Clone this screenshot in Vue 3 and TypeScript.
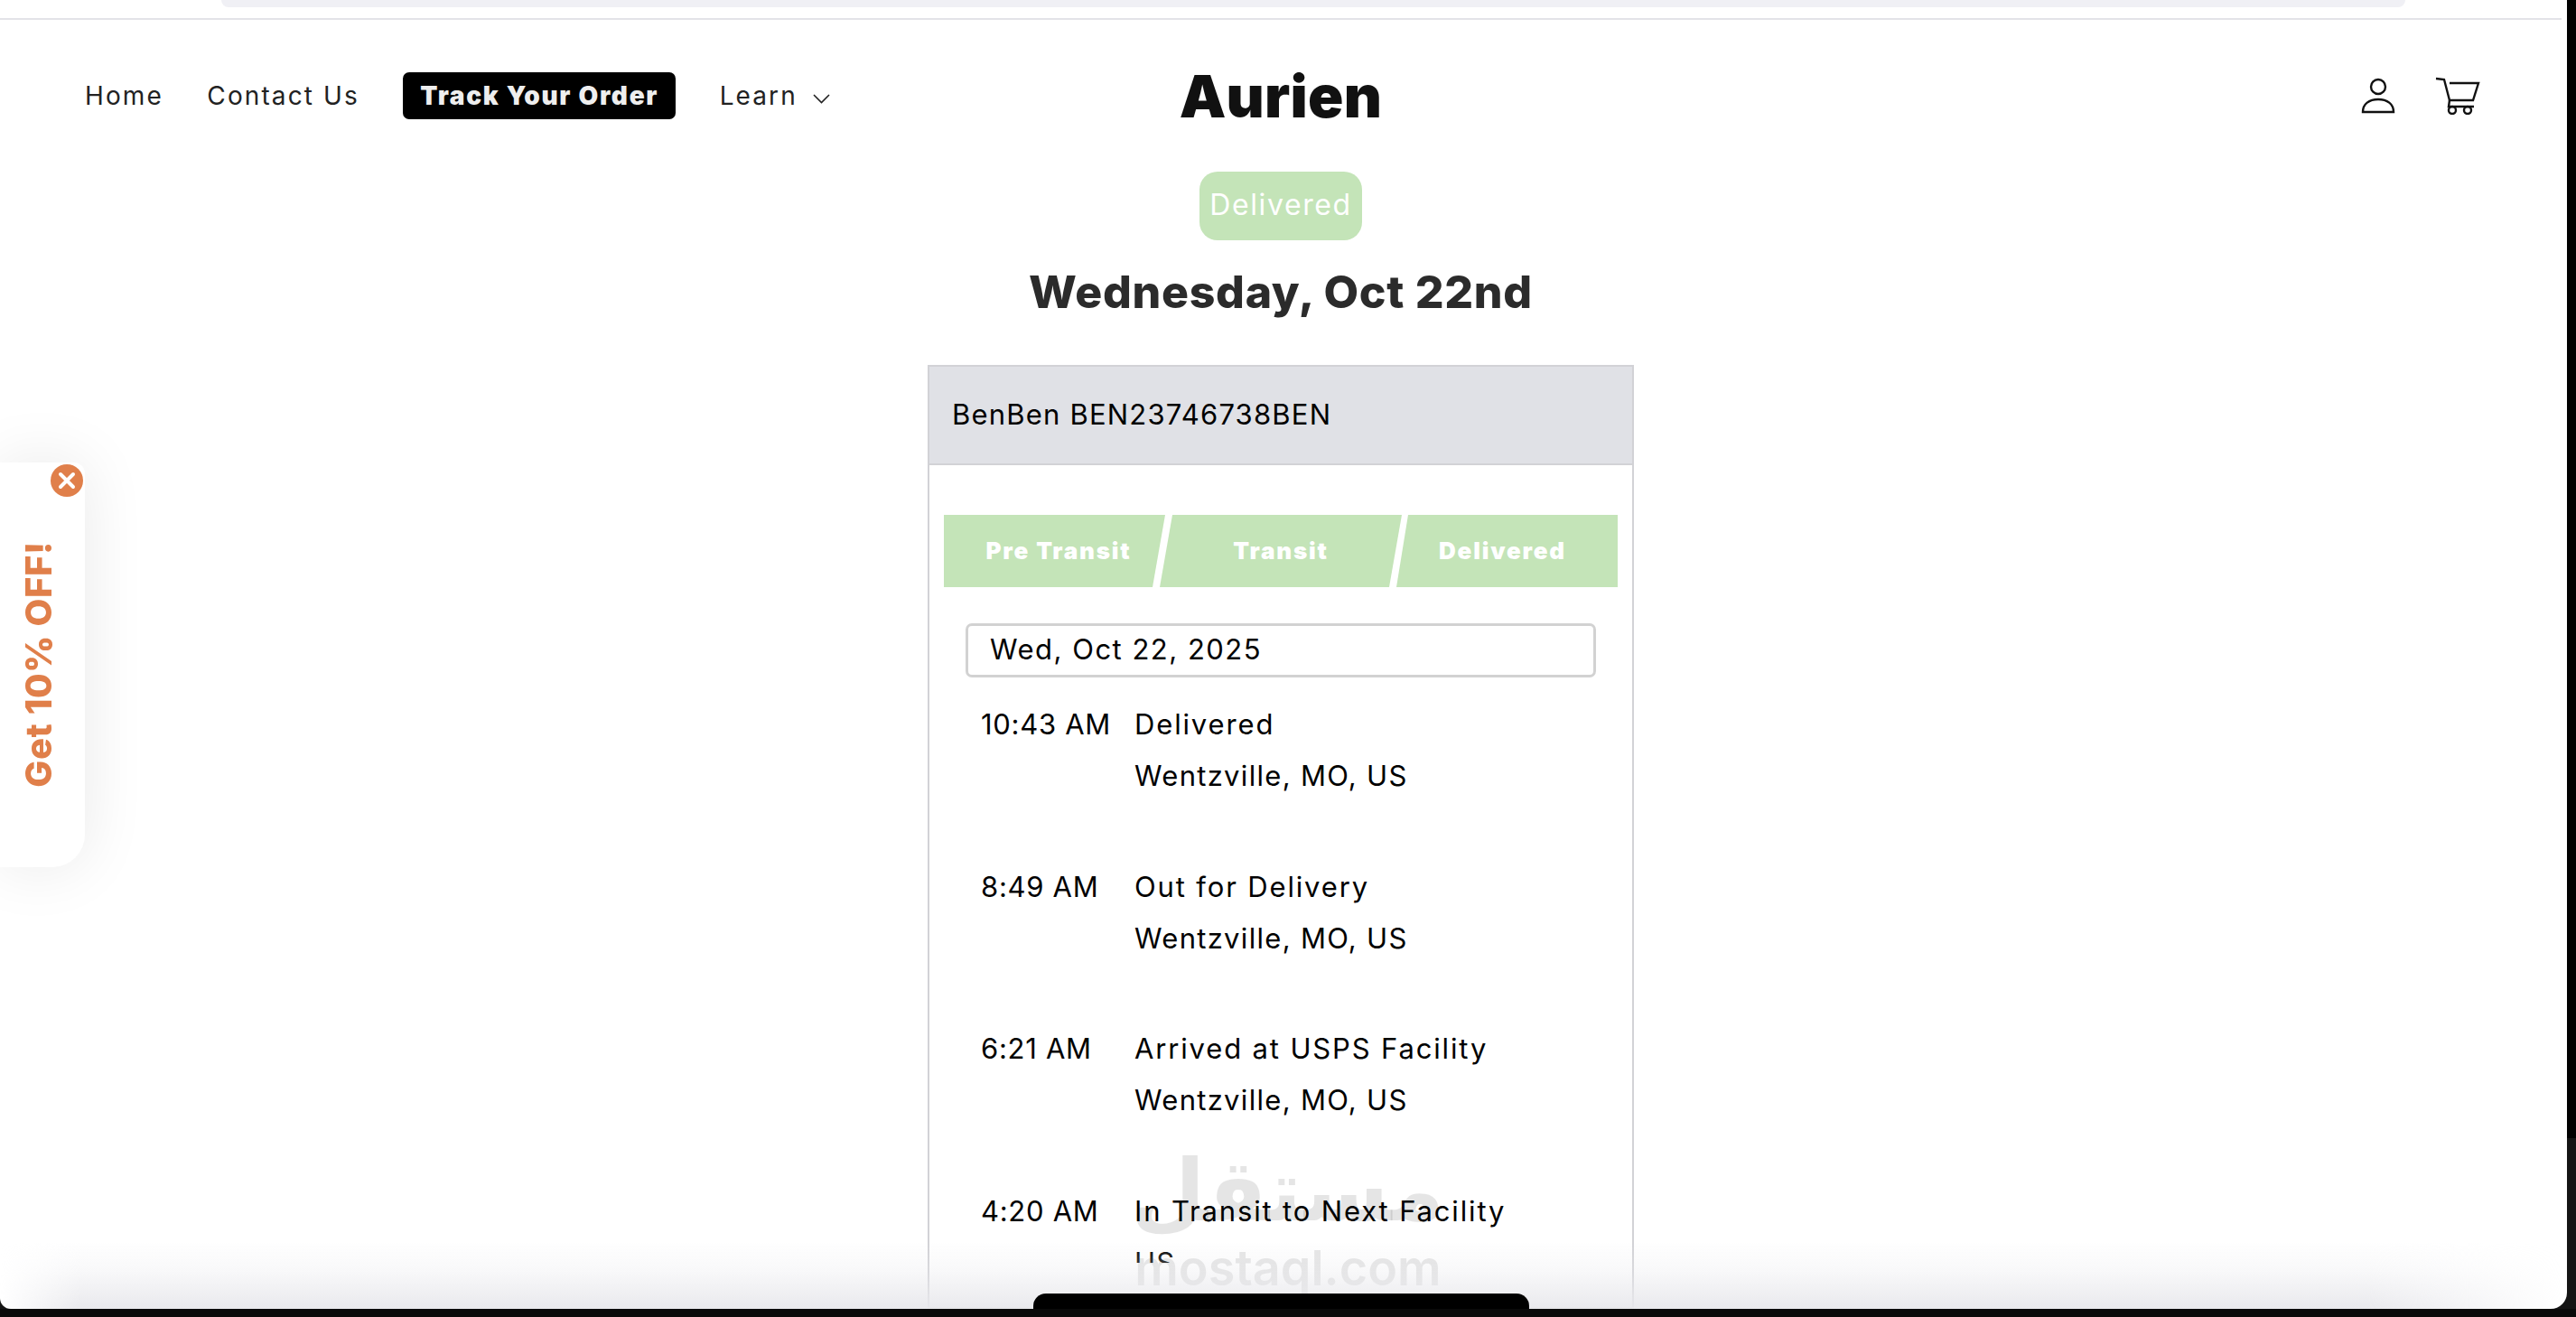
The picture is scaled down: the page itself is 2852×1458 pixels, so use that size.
<template>
  <div class="window">
    <div class="browser-top"><div class="browser-bar"></div></div>

    <header class="site-header">
      <nav class="nav">
        <a class="nav-link">Home</a>
        <a class="nav-link">Contact Us</a>
        <a class="nav-track">Track Your Order</a>
        <a class="nav-link nav-learn">
          Learn
          <svg class="chevron" width="19" height="11" viewBox="0 0 19 11" fill="none" stroke="#222" stroke-width="1.6">
            <path d="M1 1l8.500 8.500L18 1" />
          </svg>
        </a>
      </nav>
      <div class="logo">Aurien</div>
      <div class="header-icons">
        <svg width="38" height="40" viewBox="0 0 38 40" fill="none" stroke="#111" stroke-width="2.400">
          <circle cx="19" cy="10" r="8" />
          <path d="M2 38c0-9 7-14 17-14s17 5 17 14z" />
        </svg>
        <svg width="50" height="42" viewBox="0 0 50 42" fill="none" stroke="#111" stroke-width="2.400">
          <path d="M1 2l9 1 6 23h26l6-19H16" />
          <path d="M16 26l-1 7h28" />
          <circle cx="19" cy="37" r="4" />
          <circle cx="36" cy="37" r="4" />
        </svg>
      </div>
    </header>

    <main class="content">
      <div class="status-badge">Delivered</div>
      <h1 class="status-date">Wednesday, Oct 22nd</h1>

      <section class="track-card">
        <div class="track-head">BenBen BEN23746738BEN</div>
        <div class="track-body">
          <div class="steps">
            <div v-for="step in steps" :key="step" class="step">{{ step }}</div>
          </div>
          <div class="date-select">Wed, Oct 22, 2025</div>
          <div class="events">
            <div v-for="ev in events" :key="ev.time" class="event">
              <div class="event-time">{{ ev.time }}</div>
              <div>
                <div class="event-title">{{ ev.title }}</div>
                <div class="event-place">{{ ev.place }}</div>
              </div>
            </div>
          </div>
        </div>
      </section>
    </main>

    <aside class="promo">
      <span class="promo-text">Get 10% OFF!</span>
      <span class="promo-close">
        <svg width="20" height="20" viewBox="0 0 20 20" stroke="#fff" stroke-width="4" stroke-linecap="round">
          <path d="M3 3l14 14M17 3L3 17" />
        </svg>
      </span>
    </aside>

    <div class="watermark">
      <div class="watermark-ar">مستقل</div>
      <div class="watermark-en">mostaql.com</div>
    </div>
    <div class="bottom-fade"></div>
    <div class="home-pill"></div>
  </div>
</template>

<script setup lang="ts">
interface TrackEvent {
  time: string;
  title: string;
  place: string;
}

const steps: string[] = ['Pre Transit', 'Transit', 'Delivered'];

const events: TrackEvent[] = [
  { time: '10:43 AM', title: 'Delivered', place: 'Wentzville, MO, US' },
  { time: '8:49 AM', title: 'Out for Delivery', place: 'Wentzville, MO, US' },
  { time: '6:21 AM', title: 'Arrived at USPS Facility', place: 'Wentzville, MO, US' },
  { time: '4:20 AM', title: 'In Transit to Next Facility', place: 'US' }
];
</script>

<style>
html, body {
  margin: 0;
  height: 100%;
  overflow: hidden;
  background: linear-gradient(#000 1260px, #141414 1260px, #141414 1449px, #0a0a0a 1449px);
}
</style>

<style scoped>
.window {
  position: relative;
  box-sizing: border-box;
  width: 2842px;
  height: 1449px;
  padding-right: 6px;
  display: flex;
  flex-direction: column;
  background: #fff;
  border-radius: 0 0 18px 12px;
  overflow: hidden;
  font-family: Inter, "Liberation Sans", sans-serif;
  color: #000;
}

.browser-top {
  flex: none;
  height: 20px;
  border-bottom: 2px solid #e3e3e8;
  padding-left: 245px;
}

.browser-bar {
  width: 2418px;
  height: 8px;
  background: #f0f0f5;
  border-radius: 0 0 24px 24px;
}

.site-header {
  flex: none;
  height: 168px;
  display: grid;
  grid-template-columns: 1fr auto 1fr;
  align-items: center;
  padding: 0 90px;
}

.nav {
  margin-left: 4px;
  display: flex;
  align-items: center;
  gap: 48.500px;
  font-size: 28px;
  letter-spacing: 2.100px;
  color: #222;
}

.nav-learn {
  display: flex;
  align-items: center;
  gap: 17px;
}

.chevron {
  margin-top: 6px;
}

.nav-track {
  background: #000;
  color: #eee;
  font-weight: 900;
  font-size: 28px;
  letter-spacing: 1.700px;
  padding: 9px 19px;
  border-radius: 7px;
}

.logo {
  font-size: 65px;
  font-weight: 900;
  letter-spacing: 0.3px;
  color: #111;
}

.header-icons {
  display: flex;
  justify-content: flex-end;
  align-items: center;
  gap: 44px;
}

.content {
  flex: 1;
  min-height: 0;
  display: flex;
  flex-direction: column;
  align-items: center;
}

.status-badge {
  width: 180px;
  height: 76px;
  box-sizing: border-box;
  padding-bottom: 3px;
  display: flex;
  align-items: center;
  justify-content: center;
  background: #c4e4b8;
  color: #fff;
  font-size: 32px;
  letter-spacing: 1.600px;
  border-radius: 20px;
}

.status-date {
  margin: 27px 0 51px;
  font-size: 50px;
  line-height: 60px;
  font-weight: 800;
  letter-spacing: 0.7px;
  color: #2b2b2b;
}

.track-card {
  flex: 1;
  min-height: 0;
  box-sizing: border-box;
  width: 782px;
  border: 2px solid #d2d2d6;
  display: flex;
  flex-direction: column;
}

.track-head {
  flex: none;
  height: 109px;
  box-sizing: border-box;
  display: flex;
  align-items: center;
  padding: 0 0 2px 25px;
  background: #e0e1e6;
  border-bottom: 2px solid #d2d2d6;
  font-size: 31px;
  letter-spacing: 1.2px;
}

.track-body {
  padding: 55px 16px 0;
}

.steps {
  display: flex;
  height: 80px;
}

.step {
  flex: 0 0 245px;
  box-sizing: border-box;
  padding-bottom: 2px;
  display: flex;
  align-items: center;
  justify-content: center;
  background: #c4e4b8;
  color: #fff;
  font-weight: 900;
  font-size: 26px;
  letter-spacing: 1.800px;
  clip-path: polygon(0 0, 100% 0, calc(100% - 14px) 100%, 0 100%);
}

.step:nth-child(1) {
  padding-left: 9px;
}

.step:nth-child(2) {
  flex-basis: 268px;
  margin-left: -6px;
  clip-path: polygon(14px 0, 100% 0, calc(100% - 14px) 100%, 0 100%);
}

.step:nth-child(3) {
  margin-left: -6px;
  padding-right: 10px;
  clip-path: polygon(13px 0, 100% 0, 100% 100%, 0 100%);
}

.date-select {
  box-sizing: border-box;
  height: 60px;
  margin: 40px 24px 23px;
  padding: 0 0 3px 24px;
  display: flex;
  align-items: center;
  border: 3px solid #d2d2d2;
  border-radius: 7px;
  font-size: 31px;
  letter-spacing: 1.500px;
}

.events {
  height: 625px;
  overflow: hidden;
  padding-left: 41px;
  font-size: 31px;
  line-height: 57px;
}

.event {
  display: flex;
  margin-bottom: 65.500px;
}

.event-time {
  flex: 0 0 170px;
  letter-spacing: 0.7px;
}

.event-title {
  letter-spacing: 1.850px;
}

.event-place {
  letter-spacing: 1.300px;
}

.promo {
  position: absolute;
  left: 0;
  top: 512px;
  width: 94px;
  height: 448px;
  background: #fff;
  border-radius: 0 12px 36px 0;
  box-shadow: 0 0 70px rgba(0, 0, 0, 0.09);
}

.promo-text {
  position: absolute;
  left: 22px;
  top: 87px;
  writing-mode: vertical-rl;
  transform: rotate(180deg);
  font-size: 40px;
  line-height: 42px;
  font-weight: 800;
  letter-spacing: 0.6px;
  color: #e07f4a;
}

.promo-close {
  position: absolute;
  left: 56px;
  top: 2px;
  width: 36px;
  height: 36px;
  border-radius: 50%;
  background: #e07f4a;
  display: flex;
  align-items: center;
  justify-content: center;
}

.watermark {
  position: absolute;
  left: 1252px;
  top: 1262px;
  width: 344px;
  text-align: center;
  color: rgba(0, 0, 0, 0.1);
  pointer-events: none;
}

.watermark-ar {
  font-family: "DejaVu Sans", sans-serif;
  font-weight: 700;
  font-size: 95px;
  line-height: 112px;
}

.watermark-en {
  margin-left: 4px;
  font-size: 54px;
  line-height: 60px;
  font-weight: 600;
}

.bottom-fade {
  position: absolute;
  left: 0;
  right: 0;
  bottom: 0;
  height: 75px;
  background: linear-gradient(rgba(232, 232, 236, 0), rgba(232, 232, 236, 0.3) 45%, rgba(232, 232, 236, 0.95));
  -webkit-mask-image: linear-gradient(90deg, transparent, #000 90px, #000 calc(100% - 220px), transparent);
  mask-image: linear-gradient(90deg, transparent, #000 90px, #000 calc(100% - 220px), transparent);
  pointer-events: none;
}

.home-pill {
  position: absolute;
  left: 1144px;
  bottom: 0;
  width: 549px;
  height: 17px;
  background: #000;
  border-radius: 14px 14px 0 0;
}
</style>
